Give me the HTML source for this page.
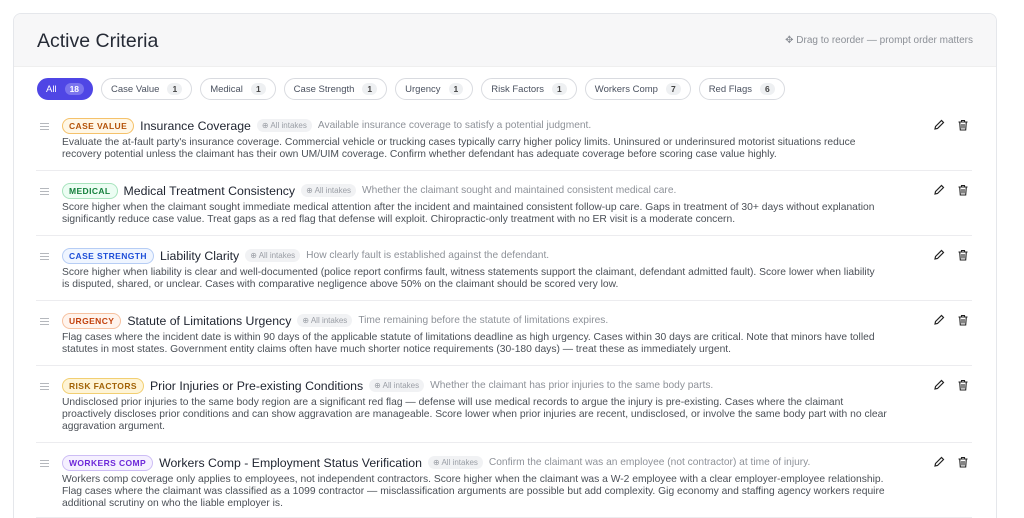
<!DOCTYPE html>
<html style="width:1024px;height:518px;overflow:hidden"><head><meta charset="utf-8"><style>
*{box-sizing:border-box;margin:0;padding:0}
body{width:1024px;height:518px;overflow:hidden;background:#fff;font-family:"Liberation Sans",sans-serif;color:#1f2937;position:relative}
.card{position:absolute;left:13px;top:13px;width:984px;height:520px;border:1px solid #e5e7eb;border-radius:8px;background:#fff;overflow:hidden}
.head{height:53px;background:#f7f7f8;border-bottom:1px solid #efefef;position:relative}
.head h1{position:absolute;left:23px;top:16px;font-size:19.5px;font-weight:500;color:#262b36}
.drag{position:absolute;right:23px;top:21px;font-size:10px;color:#8b8f96}
.filters{position:absolute;left:23px;top:64px;display:flex;gap:8px}
.f{height:22px;border:1px solid #d9dbe0;border-radius:11px;padding:0 9px;font-size:9.5px;color:#4b5260;display:flex;align-items:center;gap:8px}
.f b{font-weight:600;background:#eef0f2;border-radius:7px;padding:1px 5px;font-size:8.5px;color:#444}
.f.on{background:#4f46e5;border-color:#4f46e5;color:#fff;padding:0 8px}
.f.on b{background:#7b74ee;color:#fff}
.row{position:absolute;left:36px;width:936px;border-bottom:1px solid #ececef}
.hd{position:absolute;left:4px;top:6px;width:9px;height:7px;border-top:1px solid #b5b8bd;border-bottom:1px solid #b5b8bd}
.hd:after{content:"";position:absolute;left:0;right:0;top:2px;border-top:1px solid #b5b8bd}
.t{position:absolute;left:26px;top:0;display:flex;align-items:center;gap:6px;white-space:nowrap;height:17px}
.bd{font-size:8.5px;font-weight:700;letter-spacing:.4px;border-radius:8px;padding:2px 6px;border:1px solid}
.nm{font-size:12.3px;font-weight:500;color:#1f2430}
.ai{font-size:8px;color:#9a9ea5;background:#f1f2f4;border-radius:8px;padding:2px 5px}
.sb{font-size:10.2px;color:#8e9299}
.d{position:absolute;left:26px;top:20px;font-size:10.3px;line-height:12.2px;color:#4b5057;white-space:nowrap}
.ic{position:absolute;top:2px}
</style></head><body>
<div class="card">
<div class="head"><h1>Active Criteria</h1><div class="drag">✥ Drag to reorder — prompt order matters</div></div>
<div class="filters">
<div class="f on">All <b>18</b></div><div class="f">Case Value <b>1</b></div><div class="f">Medical <b>1</b></div><div class="f">Case Strength <b>1</b></div><div class="f">Urgency <b>1</b></div><div class="f">Risk Factors <b>1</b></div><div class="f">Workers Comp <b>7</b></div><div class="f">Red Flags <b>6</b></div>
</div>
</div>
<div id="rows"></div>
<script>
const R=[
[117,171,"CASE VALUE","#fff7e6","#f5c26b","#b45309","Insurance Coverage","Available insurance coverage to satisfy a potential judgment.",["Evaluate the at-fault party's insurance coverage. Commercial vehicle or trucking cases typically carry higher policy limits. Uninsured or underinsured motorist situations reduce","recovery potential unless the claimant has their own UM/UIM coverage. Confirm whether defendant has adequate coverage before scoring case value highly."]],
[182,236,"MEDICAL","#ecfdf3","#a7e3bd","#15803d","Medical Treatment Consistency","Whether the claimant sought and maintained consistent medical care.",["Score higher when the claimant sought immediate medical attention after the incident and maintained consistent follow-up care. Gaps in treatment of 30+ days without explanation","significantly reduce case value. Treat gaps as a red flag that defense will exploit. Chiropractic-only treatment with no ER visit is a moderate concern."]],
[247,301,"CASE STRENGTH","#eff5ff","#b6cdf5","#1d4ed8","Liability Clarity","How clearly fault is established against the defendant.",["Score higher when liability is clear and well-documented (police report confirms fault, witness statements support the claimant, defendant admitted fault). Score lower when liability","is disputed, shared, or unclear. Cases with comparative negligence above 50% on the claimant should be scored very low."]],
[312,366,"URGENCY","#fff4ed","#f6c1a0","#c2410c","Statute of Limitations Urgency","Time remaining before the statute of limitations expires.",["Flag cases where the incident date is within 90 days of the applicable statute of limitations deadline as high urgency. Cases within 30 days are critical. Note that minors have tolled","statutes in most states. Government entity claims often have much shorter notice requirements (30-180 days) — treat these as immediately urgent."]],
[377,443,"RISK FACTORS","#fef4d6","#f2cf72","#a16207","Prior Injuries or Pre-existing Conditions","Whether the claimant has prior injuries to the same body parts.",["Undisclosed prior injuries to the same body region are a significant red flag — defense will use medical records to argue the injury is pre-existing. Cases where the claimant","proactively discloses prior conditions and can show aggravation are manageable. Score lower when prior injuries are recent, undisclosed, or involve the same body part with no clear","aggravation argument."]],
[454,530,"WORKERS COMP","#f5f0ff","#cdbdf5","#6d28d9","Workers Comp - Employment Status Verification","Confirm the claimant was an employee (not contractor) at time of injury.",["Workers comp coverage only applies to employees, not independent contractors. Score higher when the claimant was a W-2 employee with a clear employer-employee relationship.","Flag cases where the claimant was classified as a 1099 contractor — misclassification arguments are possible but add complexity. Gig economy and staffing agency workers require","additional scrutiny on who the liable employer is."]]];
const pen='<svg class="ic" style="left:897px" width="12" height="12" viewBox="0 0 12 12" fill="none" stroke="#222" stroke-width="1.2"><path d="M2 10l.5-2.5L8.5 1.5l2 2-6 6z"/></svg>';
const tr='<svg class="ic" style="left:921px" width="12" height="12" viewBox="0 0 12 12" fill="none" stroke="#222" stroke-width="1.1"><path d="M1.5 3h9M4.5 3V1.5h3V3M2.7 3l.6 8h5.4l.6-8M5 5v4.5M7 5v4.5"/></svg>';
let h='';for(const r of R){h+=`<div class="row" style="top:${r[0]}px;height:${Math.min(r[1],518)-r[0]}px"><div class="hd"></div><div class="t"><span class="bd" style="background:${r[3]};border-color:${r[4]};color:${r[5]}">${r[2]}</span><span class="nm">${r[6]}</span><span class="ai">⊕ All intakes</span><span class="sb">${r[7]}</span></div><div class="d">${r[8].join('<br>')}</div>${pen}${tr}</div>`;}
document.getElementById('rows').innerHTML=h;
</script>
</body></html>
